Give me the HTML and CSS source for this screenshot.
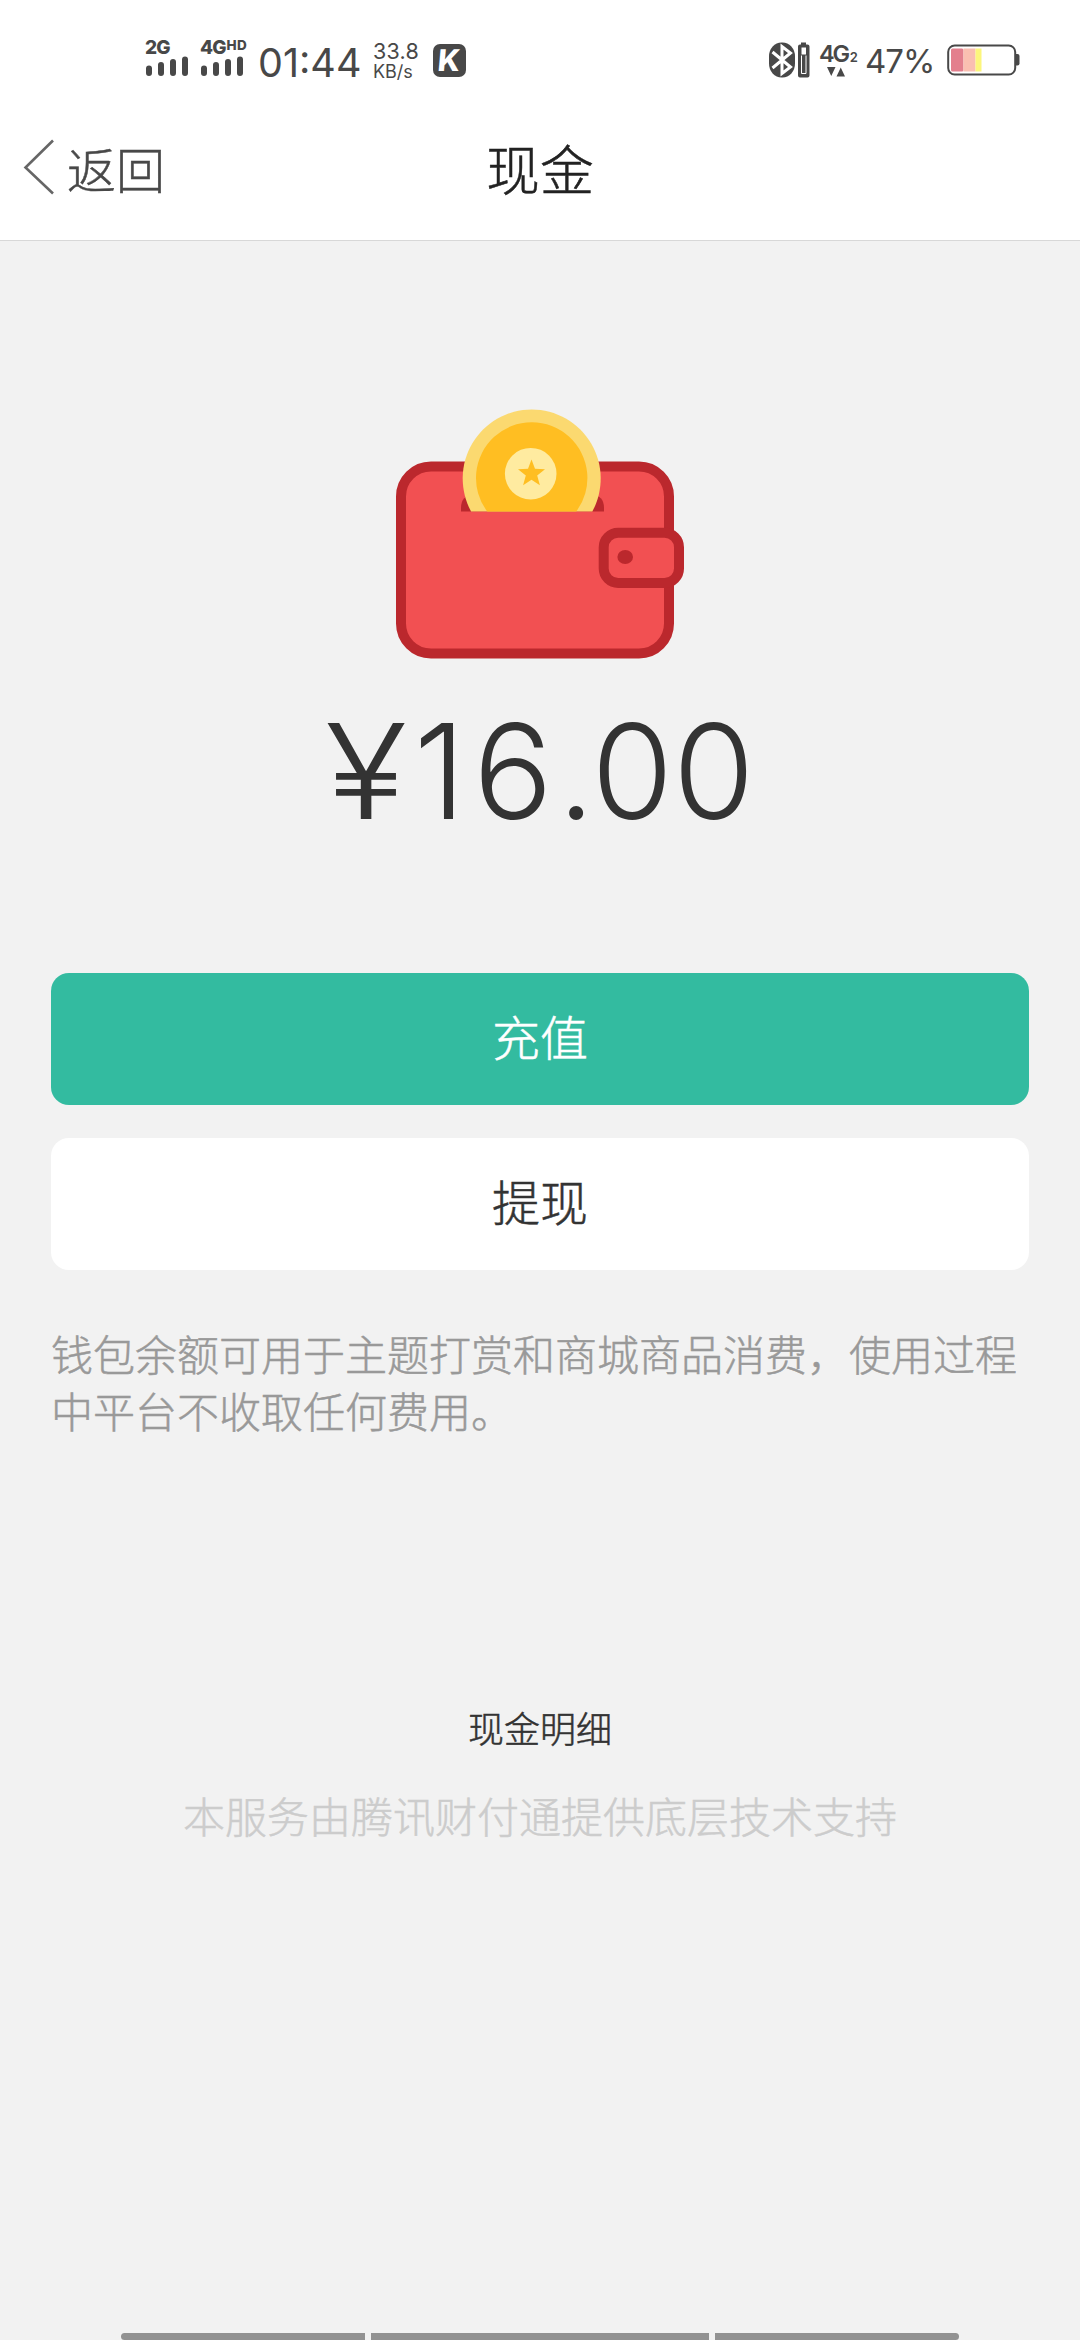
FILE: index.html
```html
<!DOCTYPE html>
<html lang="zh-CN">
<head>
<meta charset="utf-8">
<title>现金</title>
<link rel="stylesheet" href="styles.css">
</head>
<body>
<div class="page">
  <div class="status">
    <div class="signal">
      <div class="net">2G</div>
      <svg width="43" height="20" viewBox="0 0 43 20"><path d="M3 12.5V17M15 9V17M27 6V17M39 3.5V17" class="bars"/></svg>
    </div>
    <div class="signal second">
      <div class="net">4G<span class="hd">HD</span></div>
      <svg width="43" height="20" viewBox="0 0 43 20"><path d="M3 12.5V17M15 9V17M27 6V17M39 3.5V17" class="bars"/></svg>
    </div>
    <div class="time">01:44</div>
    <div class="speed"><span class="rate">33.8</span><span class="unit">KB/s</span></div>
    <div class="app"><span class="app-letter">K</span></div>
    <div class="right">
      <svg class="bt" width="41" height="36" viewBox="0 0 41 36">
        <rect x="0" y="0.5" width="26" height="35" rx="12.5" ry="14" fill="#484848"/>
        <path d="M3.500 10L21.500 25L13 31.500V4.500L21.500 11L3.500 26" fill="none" stroke="#fff" stroke-width="3"/>
        <path d="M32 0.500h5v2h1.500q2 0 2 2V33.500q0 2-2 2h-7.500q-2 0-2-2V4.500q0-2 2-2h1z" fill="#484848"/>
        <path d="M32.500 5.500h4.500v7h-4.500z" fill="#fff"/>
        <path d="M32.500 13.500v18h4.500v-18" fill="none" stroke="#fff" stroke-width="1"/>
      </svg>
      <div class="data">
        <div class="data-net">4G<span class="sim">2</span></div>
        <svg width="19" height="10" viewBox="0 0 19 10"><path d="M0 0H8.500L4.250 9ZM9.500 9.500H18L13.750 0.500Z" fill="#484848"/></svg>
      </div>
      <div class="percent">47%</div>
      <svg width="74" height="32" viewBox="0 0 74 32">
        <rect x="4" y="4.500" width="12.500" height="23" rx="1.500" fill="#e37f8d"/>
        <rect x="16.500" y="4.500" width="12" height="23" fill="#fabfb1"/>
        <rect x="28.500" y="4.500" width="6" height="23" fill="#fcf67c"/>
        <rect x="1.200" y="1.500" width="67" height="29" rx="6.500" fill="none" stroke="#484848" stroke-width="2"/>
        <path d="M69 10h1.500q2 0 2 2v7.500q0 2-2 2H69z" fill="#484848"/>
      </svg>
    </div>
  </div>

  <header class="nav">
    <div class="back">
      <svg width="32" height="56" viewBox="0 0 32 56"><path d="M30 1.500L2.500 28.500L30 54.500" fill="none" stroke="#666" stroke-width="2.600"/></svg>
      <span>返回</span>
    </div>
    <h1 class="title">现金</h1>
    <div></div>
  </header>

  <main class="content">
    <svg class="wallet" width="290" height="252" viewBox="395 407 290 252">
      <rect x="401" y="466.500" width="268" height="187" rx="30" fill="#f25052" stroke="#bb282d" stroke-width="10"/>
      <path d="M461 511.500V508Q461 495 474 495H591Q604 495 604 508V511.500Z" fill="#bb282d"/>
      <path d="M471.100 511.500A69 69 0 1 1 592.300 511.500Z" fill="#fbd970"/>
      <path d="M487.200 511.500A55.700 55.700 0 1 1 576.200 511.500Z" fill="#ffbe22"/>
      <circle cx="530.700" cy="473.700" r="25.800" fill="#ffeba0"/>
      <path d="M531.500 459.500L535 468.800L545 469.300L537.200 475.500L539.900 485.200L531.500 479.700L523.100 485.200L525.800 475.500L518 469.300L528 468.800Z" fill="#ffbe22"/>
      <rect x="603.700" y="532.700" width="75.300" height="50.300" rx="14.500" fill="#f25052" stroke="#bb282d" stroke-width="10"/>
      <ellipse cx="625.200" cy="557" rx="7.800" ry="7" fill="#bb282d"/>
    </svg>
    <div class="amount"><span class="yen">¥</span><span class="one">1</span><span class="six">6</span>.<span>00</span></div>
    <div class="actions">
      <button class="btn primary">充值</button>
      <button class="btn plain">提现</button>
    </div>
    <p class="note">钱包余额可用于主题打赏和商城商品消费，使用过程中平台不收取任何费用。</p>
    <a class="detail">现金明细</a>
    <p class="support">本服务由腾讯财付通提供底层技术支持</p>
  </main>

  <div class="gesture"><i></i><i></i><i></i></div>
</div>
</body>
</html>
```
FILE: styles.css
```css
* { box-sizing: border-box; }
body {
  margin: 0;
  background: #f2f2f2;
  font-family: "Noto Sans CJK SC", sans-serif;
  font-weight: 300;
  color: #333;
}
.page {
  width: 1080px;
  height: 2340px;
  display: flex;
  flex-direction: column;
  overflow: hidden;
}
svg { display: block; flex: none; }

.status {
  height: 100px;
  background: #fff;
  color: #484848;
  display: flex;
  align-items: flex-start;
  padding: 40px 59px 0 145px;
  font-family: Inter, sans-serif;
  white-space: nowrap;
}
.signal { width: 55px; }
.second { width: 58px; }
.signal svg { margin-left: 1px; }
.net {
  height: 16px;
  line-height: 15px;
  font-size: 19px;
  font-weight: 800;
  letter-spacing: -0.9px;
}
.hd { font-size: 13.5px; letter-spacing: 0.2px; margin-left: 1px; vertical-align: 4px; line-height: 1px; }
.bars { stroke: #484848; stroke-width: 6; stroke-linecap: round; }
.time {
  width: 115px;
  padding-top: 4px;
  font-size: 39.5px;
  line-height: 39px;
  font-weight: 400;
}
.speed { width: 60px; display: flex; flex-direction: column; font-weight: 400; }
.rate { font-size: 21.5px; line-height: 22px; letter-spacing: 0.2px; }
.unit { font-size: 18px; line-height: 18px; padding-top: 1px; }
.app {
  width: 33px;
  height: 33px;
  margin-top: 4px;
  border-radius: 7px;
  background: #484848;
  color: #fff;
  display: flex;
  align-items: center;
  justify-content: center;
}
.app-letter { font-size: 30px; font-weight: 800; line-height: 33px; transform: skewX(-5deg); }
.right { margin-left: auto; display: flex; align-items: flex-start; }
.bt { margin: 2px 9px 0 0; }
.data { width: 46px; }
.data-net { height: 27px; line-height: 28px; font-size: 23.5px; font-weight: 600; letter-spacing: -2.2px; }
.sim { font-size: 13px; letter-spacing: 0; margin-left: 2px; }
.data svg { margin-left: 8px; }
.percent { width: 82px; padding-top: 5px; font-size: 33px; line-height: 33px; font-weight: 400; letter-spacing: -1px; }
.right > svg:last-child { margin-top: 4px; }

.nav {
  height: 141px;
  background: #fff;
  border-bottom: 1px solid #d8d8d8;
  display: grid;
  grid-template-columns: 1fr auto 1fr;
  align-items: center;
  padding: 0 23px 4px;
}
.nav, .btn, .note, .detail, .support { -webkit-text-stroke: 0.5px currentColor; }
.back {
  display: flex;
  align-items: center;
  gap: 12px;
  font-size: 49px;
  line-height: 60px;
  color: #484848;
}
.back svg { margin-top: -2px; }
.back span { margin-top: -1px; }
.title { margin: 0; font-size: 54px; line-height: 60px; font-weight: 300; color: #222; }

.content {
  flex: 1;
  display: flex;
  flex-direction: column;
  align-items: center;
  padding: 166px 51px 0;
}
.amount {
  margin-top: 32px;
  height: 160px;
  line-height: 160px;
  font-family: Inter, sans-serif;
  font-size: 132px;
  font-weight: 300;
}
.yen {
  display: inline-block;
  margin-right: 17px;
  transform: scaleX(1.15);
  transform-origin: left;
}
.one { letter-spacing: 7.5px; }
.six { letter-spacing: 5px; }
.actions { width: 100%; margin-top: 122px; display: flex; flex-direction: column; gap: 33px; }
.btn {
  height: 132px;
  border: 0;
  border-radius: 18px;
  padding: 0 0 9px;
  font: inherit;
  font-size: 48px;
}
.primary { background: #33bba0; color: #fff; }
.plain { background: #fff; color: #333; }
.note {
  width: 100%;
  margin: 54px 0 0;
  font-size: 42px;
  line-height: 57px;
  color: #999;
}
.detail { margin-top: 262px; font-size: 36px; line-height: 54px; }
.support { margin: 31px 0 0; font-size: 42px; line-height: 60px; color: #ccc; }

.gesture {
  height: 7px;
  width: 838px;
  margin-left: 121px;
  display: grid;
  grid-template-columns: 244px 338px 244px;
  gap: 6px;
}
.gesture i { background: #929292; }
.gesture i:first-child { border-radius: 4px 0 0 4px; }
.gesture i:last-child { border-radius: 0 4px 4px 0; }
```
